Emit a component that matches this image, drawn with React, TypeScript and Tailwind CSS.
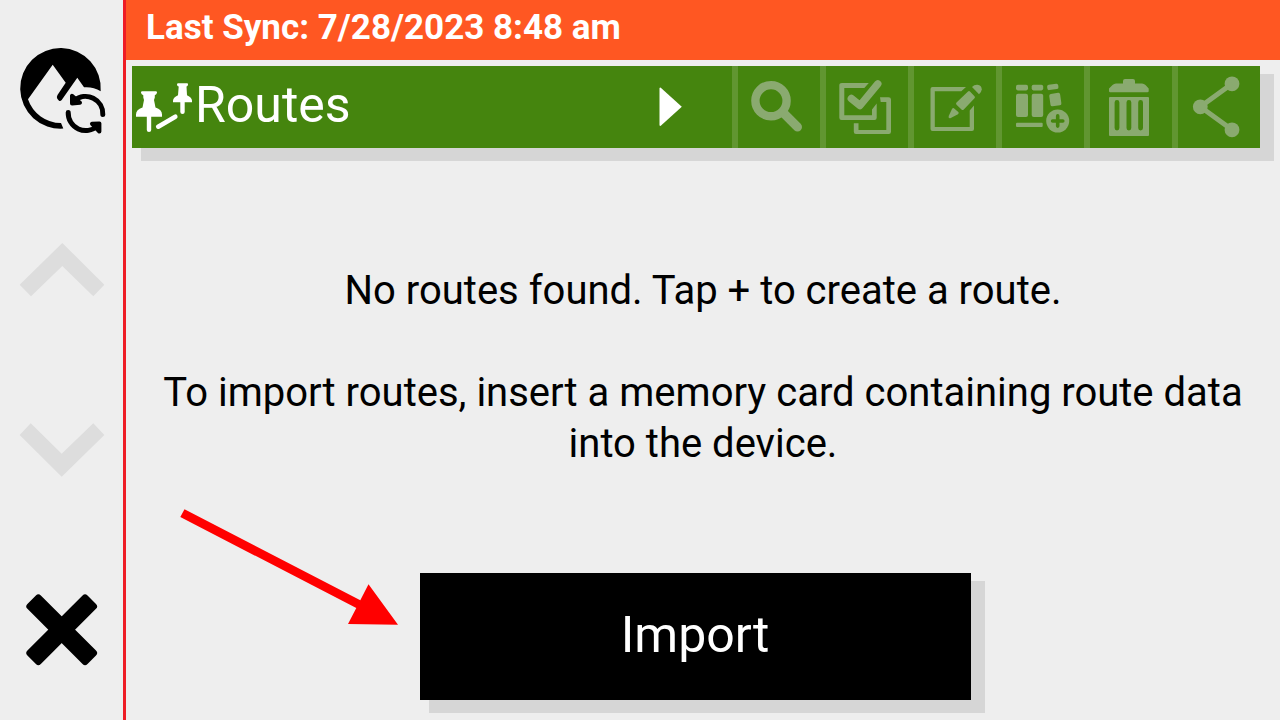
import type { ReactNode } from "react";

type ToolProps = { label: string; viewBox: string; children: ReactNode };

function ToolButton({ label, viewBox, children }: ToolProps) {
  return (
    <button
      type="button"
      aria-label={label}
      className="h-full w-[88px] shrink-0 border-l-6 border-[#619631] text-[#8aaa70]"
    >
      <svg viewBox={viewBox} className="h-[82px] w-[82px]" fill="currentColor" aria-hidden="true">
        {children}
      </svg>
    </button>
  );
}

function SideButton({ label, viewBox, children }: ToolProps) {
  return (
    <button type="button" aria-label={label} className="flex items-center justify-center">
      <svg viewBox={viewBox} className="h-[100px] w-[123px]" fill="currentColor" aria-hidden="true">
        {children}
      </svg>
    </button>
  );
}

function Sidebar() {
  return (
    <nav
      aria-label="Main"
      className="grid w-[126px] shrink-0 grid-rows-4 border-r-3 border-[#ee1c25] text-black"
    >
      <SideButton label="Sync" viewBox="0 40 123 100">
        <path d="M100.7 91.3A40.3 40.3 0 1 0 63.3 128.6L61 123A34.8 34.8 0 0 1 28 99.3L52.7 64.7L65.7 82.7L57.5 95Q56.3 97 57.3 98.7L59 100.7Q60.3 101.5 61.7 100L77.3 77.7L84 87.3Q93 86.5 100.7 91.3Z" />
        <g fill="none" stroke="currentColor" strokeWidth="5" strokeLinecap="round">
          <path d="M74.5 100.5A17.2 17.2 0 0 1 102.8 114.5" />
          <path d="M68.2 112.5A17.5 17.5 0 0 0 97.5 126" />
        </g>
        <g stroke="currentColor" strokeWidth="4" strokeLinejoin="round">
          <path d="M72 95.8V103.6L80 102.8Z" />
          <path d="M92 123.8L99.4 123.4V131.6Z" />
        </g>
      </SideButton>
      <SideButton label="Scroll up" viewBox="0 220 123 100">
        <path
          fill="#dddddd"
          d="M62.3 243L104.3 284.7L93.3 296.3L62.3 266L31 296.3L19.7 284.7Z"
        />
      </SideButton>
      <SideButton label="Scroll down" viewBox="0 400 123 100">
        <path
          fill="#dddddd"
          d="M30.7 423.3L61.7 453.7L93.3 423.3L104.3 435L61.7 476.7L19.7 435Z"
        />
      </SideButton>
      <SideButton label="Close" viewBox="0 580 123 100">
        <rect x="19.2" y="620.2" width="85" height="19" rx="3.5" transform="rotate(45 61.7 629.7)" />
        <rect x="19.2" y="620.2" width="85" height="19" rx="3.5" transform="rotate(-45 61.7 629.7)" />
        <rect x="51.2" y="619.2" width="21" height="21" />
      </SideButton>
    </nav>
  );
}

function Toolbar() {
  return (
    <div
      role="toolbar"
      aria-label="Routes"
      className="mt-[6px] mr-5 ml-[6px] flex h-[82px] bg-[#45850e] shadow-[9px_8px_0_#d6d6d6,14px_8px_0_#d6d6d6,9px_13px_0_#d6d6d6,14px_13px_0_#d6d6d6]"
    >
      <button type="button" className="flex min-w-0 flex-1 items-center text-white">
        <svg viewBox="132 66 63 82" className="h-[82px] w-[63px] shrink-0" fill="currentColor" aria-hidden="true">
          <path d="M142 91.3H156Q157.3 91.3 157 92.8Q156.6 94.7 154.8 95.2V97.5L154 100L155.5 107.5Q162 109.5 162 114.5V116.7H151.2V130Q151.2 132 149 132Q146.8 132 146.8 130V116.7H136V114.5Q136 109.5 142.5 107.5L144 100L143.3 97.5V95.2Q141.4 94.7 141 92.8Q140.7 91.3 142 91.3Z" />
          <path d="M178 83.3H187.2Q188.4 83.3 188 84.8Q187.7 86.3 186.5 86.6L187 95.3Q192 97.5 192 100.8V102.2H184.7V112Q184.7 114 182.5 114Q180.3 114 180.3 112V102.2H173V100.8Q173 97.5 178 95.3L178.7 86.6Q177.3 86.3 177 84.8Q176.7 83.3 178 83.3Z" />
          <path d="M158.2 126.7L175.3 116.7" stroke="currentColor" strokeWidth="4.6" strokeLinecap="round" />
        </svg>
        <span className="pb-1 text-[50px]">Routes</span>
        <svg viewBox="658 86 25 42" className="mr-[49px] ml-auto h-[42px] w-[25px]" fill="currentColor" aria-hidden="true">
          <path d="M660.5 87.5L681.8 106.7L660.5 126Q659.5 126 659.5 125V88.5Q659.5 87.5 660.5 87.5Z" />
        </svg>
      </button>
      <ToolButton label="Search" viewBox="738 66 82 82">
        <circle cx="771" cy="100.7" r="15.6" fill="none" stroke="currentColor" strokeWidth="8.4" />
        <path d="M783.5 113L797.5 127" stroke="currentColor" strokeWidth="9" strokeLinecap="round" />
        <path d="M780 115L785 110L788 113L783 118Z" />
      </ToolButton>
      <ToolButton label="Select" viewBox="826 66 82 82">
        <path d="M842 83H868.8L864.3 88H844.3V115.3H872V109.5L876.7 103.5V117.8Q876.7 120 874.5 120H841.5Q839.3 120 839.3 117.8V85.2Q839.3 83 842 83Z" />
        <path d="M851.3 98.5L860 105.5L877.8 83.8" fill="none" stroke="currentColor" strokeWidth="7.4" strokeLinecap="round" strokeLinejoin="round" />
        <path d="M880 97.3H888.5Q891 97.3 891 99.5V131.8Q891 134 888.8 134H856Q853.8 134 853.8 131.8V123.3H858.5V130H886.3V102H880.7Z" />
      </ToolButton>
      <ToolButton label="Edit" viewBox="914 66 82 82">
        <path d="M932.5 87H966L961.3 91.3H934.8V127H969.7V110.5L974 105.5V129Q974 131 972 131H932.5Q930.5 131 930.5 129V89Q930.5 87 932.5 87Z" />
        <path d="M968 91.5Q969 90.5 970 91.5L974.5 96.2Q975.5 97.3 974.5 98.3L963.8 109.5Q962.5 110.5 961.5 109.5L956.5 104.8Q955.5 103.6 956.5 102.5Z" />
        <path d="M952 109Q953 107.4 954.5 108.7L958.3 112Q959.3 113 958 114.2L950.8 118Q948 118.8 948.7 116Z" />
        <path d="M972 86.9Q974 84.5 977.5 84.7Q981.8 85.5 981.8 89.5Q981.5 92 979 94.3Z" />
      </ToolButton>
      <ToolButton label="Add to collection" viewBox="1002 66 82 82">
        <rect x="1016" y="84.7" width="12" height="5.7" rx="1.8" />
        <rect x="1031.7" y="84.7" width="11.5" height="5.7" rx="1.8" />
        <rect x="1047.2" y="84.2" width="11.2" height="5.4" rx="1.8" transform="rotate(-8 1052.8 87)" />
        <rect x="1016" y="93.7" width="12" height="23.3" rx="2" />
        <rect x="1031.7" y="93.7" width="11.5" height="23.3" rx="2" />
        <rect x="1049.8" y="93.3" width="11" height="12.5" rx="1.8" transform="rotate(-8 1055.3 99.5)" />
        <rect x="1016" y="122.7" width="26.7" height="4.4" rx="1" />
        <circle cx="1057.7" cy="121" r="11.5" />
        <path d="M1052.6 121H1062.8M1057.7 115.9V126.1" stroke="#45850e" strokeWidth="3.6" strokeLinecap="round" />
      </ToolButton>
      <ToolButton label="Delete" viewBox="1090 66 82 82">
        <path d="M1125 79H1133Q1135 79 1135 81V83.5H1142Q1144 83.5 1145.5 85L1148.7 88.6V91Q1148.7 92.2 1147.5 92.2H1110.2Q1109 92.2 1109 91V88.6L1112.5 85Q1114 83.5 1116 83.5H1123V81Q1123 79 1125 79Z" />
        <rect x="1109" y="97" width="40" height="39" rx="1" />
        <path d="M1117 102.5V128M1128.9 102.5V128M1140.6 102.5V128" stroke="#45850e" strokeWidth="4.8" strokeLinecap="round" />
      </ToolButton>
      <ToolButton label="Share" viewBox="1178 66 82 82">
        <circle cx="1232" cy="83.8" r="7.4" />
        <circle cx="1200.3" cy="106.8" r="7.4" />
        <circle cx="1232" cy="129.8" r="7.4" />
        <path d="M1232 83.8L1200.3 106.8L1232 129.8" fill="none" stroke="currentColor" strokeWidth="5" />
      </ToolButton>
    </div>
  );
}

export default function App() {
  return (
    <div className="relative flex min-h-screen bg-[#eeeeee] font-['Roboto',sans-serif] text-black">
      <Sidebar />
      <main className="flex min-w-0 flex-1 flex-col">
        <header className="flex h-[60px] items-center bg-[#ff5722] px-5 pb-[3px] text-[35px] font-bold text-white">
          Last Sync: 7/28/2023 8:48 am
        </header>
        <Toolbar />
        <div className="flex flex-1 flex-col justify-center gap-[51px] px-5 pt-3 text-center text-[40px] leading-[51px]">
          <p>No routes found. Tap + to create a route.</p>
          <p>To import routes, insert a memory card containing route data into the device.</p>
        </div>
        <div className="mb-5 flex justify-center pr-5 pl-1">
          <button
            type="button"
            className="h-[127px] w-[551px] bg-black pb-[2px] text-[50px] text-white shadow-[9px_8px_0_#d6d6d6,14px_8px_0_#d6d6d6,9px_13px_0_#d6d6d6,14px_13px_0_#d6d6d6]"
          >
            Import
          </button>
        </div>
      </main>
      <svg
        viewBox="180 508 220 120"
        className="pointer-events-none absolute bottom-[92px] left-[180px] h-[120px] w-[220px]"
        aria-hidden="true"
      >
        <path fill="#ff0000" d="M184.5 509.3L360.3 600.3L368.5 584.2L398 624.8L348 624L356.3 608L180.3 517Z" />
      </svg>
    </div>
  );
}
